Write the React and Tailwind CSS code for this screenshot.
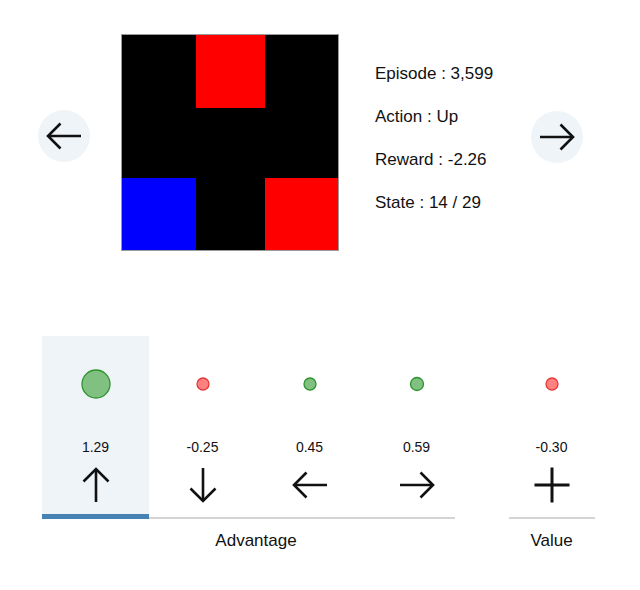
import React from 'react';

const cells = [
  'bg-black', 'bg-[#ff0000]', 'bg-black',
  'bg-black', 'bg-black', 'bg-black',
  'bg-[#0000ff]', 'bg-black', 'bg-[#ff0000]',
];

const stats = [
  ['Episode', '3,599'],
  ['Action', 'Up'],
  ['Reward', '-2.26'],
  ['State', '14 / 29'],
];

const advantages = [
  { dir: 'up', value: '1.29', r: 14, positive: true, active: true },
  { dir: 'down', value: '-0.25', r: 6, positive: false },
  { dir: 'left', value: '0.45', r: 6, positive: true },
  { dir: 'right', value: '0.59', r: 6.5, positive: true },
];

const rotation = { right: 0, down: 90, left: 180, up: 270 };

// horizontal arrow pointing right, rotated for the other directions
const Arrow = ({ dir = 'right', size = 36, stroke = 2.5 }) => (
  <svg
    width={size}
    height={size}
    viewBox="0 0 36 36"
    style={{ transform: `rotate(${rotation[dir]}deg)` }}
  >
    <g fill="none" stroke="#111" strokeWidth={stroke} strokeLinejoin="miter">
      <path d="M1 18H34" />
      <path d="M21.5 5.5L34 18L21.5 30.5" />
    </g>
  </svg>
);

const Plus = () => (
  <svg width="36" height="36" viewBox="0 0 36 36">
    <g fill="none" stroke="#111" strokeWidth="3">
      <path d="M18 0.5V35.5" />
      <path d="M0.5 18H35.5" />
    </g>
  </svg>
);

const Dot = ({ r, positive }) => (
  <svg width="34" height="34" viewBox="0 0 34 34">
    <circle
      cx="17"
      cy="17"
      r={r}
      fill={positive ? '#80c080' : '#ff8080'}
      stroke={positive ? '#2f922f' : '#e23a3a'}
      strokeWidth="1.3"
    />
  </svg>
);

const Column = ({ r, positive, value, icon, active }) => (
  <div className={`w-[107px] h-[178px] flex flex-col items-center ${active ? 'bg-[#eff4f9]' : ''}`}>
    <div className="h-[96px] flex items-center justify-center">
      <Dot r={r} positive={positive} />
    </div>
    <div className="h-[30px] flex items-center justify-center text-[14px] text-[#111]">{value}</div>
    <div className="h-[46px] flex items-center justify-center">{icon}</div>
  </div>
);

const NavButton = ({ dir, className }) => (
  <button className={`w-[52px] h-[52px] rounded-full bg-[#eff4f9] flex items-center justify-center ${className}`}>
    <Arrow dir={dir} size={36} stroke={2.6} />
  </button>
);

export default function App() {
  return (
    <div className="w-[640px] h-[590px] bg-white text-[#111] font-['Liberation_Sans',Arial,sans-serif]">
      {/* episode viewer */}
      <div className="flex pt-[34px]">
        <NavButton dir="left" className="ml-[38px] mt-[76px]" />
        <div className="ml-[31px] w-[218px] h-[217px] border border-[#9a9a9a] grid grid-cols-[74px_69px_73px] grid-rows-[73px_70px_72px]">
          {cells.map((c, i) => (
            <div key={i} className={c} />
          ))}
        </div>
        <div className="ml-[36px] w-[156px] mt-[18px] flex flex-col">
          {stats.map(([k, v]) => (
            <div key={k} className="h-[43px] flex items-center text-[17px]">
              {k} : {v}
            </div>
          ))}
        </div>
        <NavButton dir="right" className="mt-[77px]" />
      </div>

      {/* advantage / value */}
      <div className="flex pl-[42px] mt-[85px]">
        <div className="w-[428px] flex flex-col">
          <div className="flex">
            {advantages.map((a) => (
              <Column
                key={a.dir}
                r={a.r}
                positive={a.positive}
                value={a.value}
                active={a.active}
                icon={<Arrow dir={a.dir} size={36} stroke={2.6} />}
              />
            ))}
          </div>
          <div className="h-[5px] flex items-end">
            <div className="w-[107px] h-[5px] bg-[#4682b4]" />
            <div className="w-[306px] h-[2px] bg-[#d4d4d4]" />
          </div>
          <div className="h-[44px] flex items-center justify-center text-[17px]">Advantage</div>
        </div>

        <div className="ml-[28px] w-[107px] flex flex-col items-center">
          <Column r={6} positive={false} value="-0.30" icon={<Plus />} />
          <div className="h-[5px] w-full flex items-end justify-center">
            <div className="w-[86px] h-[2px] bg-[#d4d4d4]" />
          </div>
          <div className="h-[44px] flex items-center justify-center text-[17px]">Value</div>
        </div>
      </div>
    </div>
  );
}
